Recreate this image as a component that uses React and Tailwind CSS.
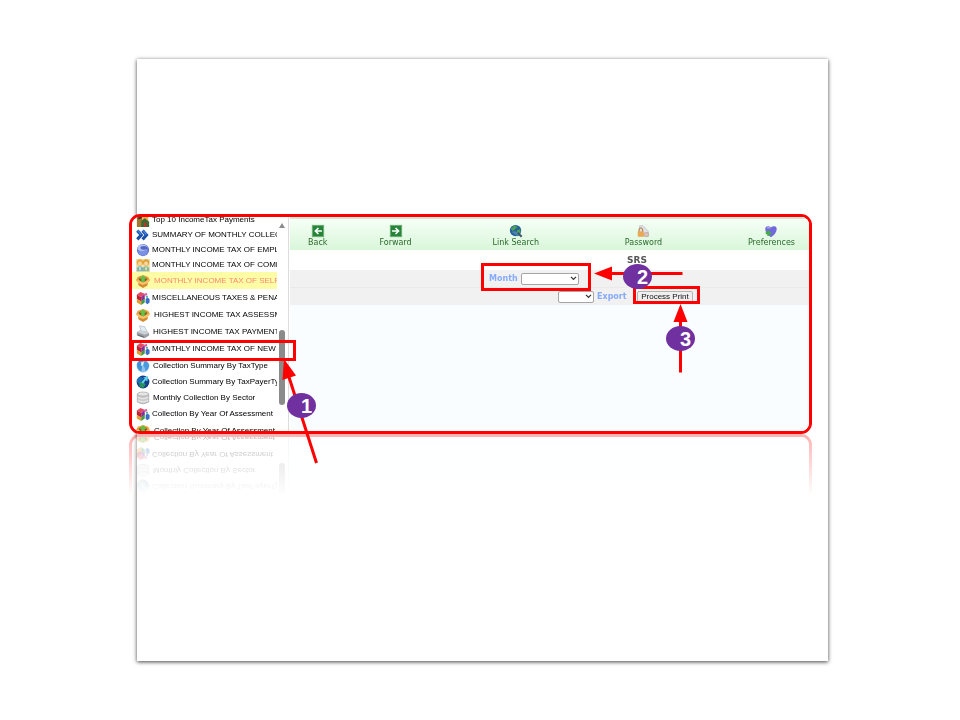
import React from "react";

function Icon({ children }) {
  return (
    <svg viewBox="0 0 16 16" className="h-[14px] w-[14px] shrink-0" aria-hidden="true">
      {children}
    </svg>
  );
}

const ICONS = {
  people: (
    <>
      <rect x="1" y="5" width="6" height="11" fill="#a07830" />
      <circle cx="4" cy="4" r="3" fill="#443322" />
      <rect x="7" y="3" width="7" height="7" fill="#e4b44b" />
      <path d="M6 16V9l4-3 5 4v6z" fill="#3c6b35" />
      <path d="M9 16v-5h3v5z" fill="#b53a2a" />
    </>
  ),
  chevrons: (
    <>
      <path d="M1.500 3l4.500 5-4.500 5" fill="none" stroke="#1c4fa8" strokeWidth="3.600" />
      <path d="M7.500 3l4.500 5-4.500 5" fill="none" stroke="#1c4fa8" strokeWidth="3.600" />
      <path d="M2 3l4 4.500M8 3l4 4.500" fill="none" stroke="#3f8be6" strokeWidth="1.500" />
    </>
  ),
  sphere: (
    <>
      <circle cx="8" cy="8" r="7" fill="#5a72cf" />
      <circle cx="8" cy="9" r="5.500" fill="#7d92e4" />
      <path d="M1.500 7q0-4 4-5.500 5-1 8 3-2 4-6 4.500-4 0-6-2z" fill="#b4c2f6" />
      <ellipse cx="9" cy="5.500" rx="4" ry="2.200" fill="#5468bd" />
    </>
  ),
  users: (
    <>
      <rect width="16" height="15" y="1" fill="#f0e2ae" />
      <circle cx="4.500" cy="5" r="3.600" fill="#e8a83a" />
      <circle cx="4.500" cy="6.200" r="2.200" fill="#f7d6a2" />
      <circle cx="11.500" cy="5" r="3.600" fill="#e0a03a" />
      <circle cx="11.500" cy="6.200" r="2.200" fill="#f7d6a2" />
      <path d="M1 15v-4q3.500-3.500 7 0v4z" fill="#79b5bd" />
      <path d="M8 15v-4q3.500-3.500 7 0v4z" fill="#8eb795" />
      <path d="M4.500 10v4M11.500 10v4" stroke="#e7edc9" strokeWidth="1.500" />
    </>
  ),
  box: (
    <>
      <path d="M2 8l1 5 5 3 5-3 1-5z" fill="#d68a30" />
      <path d="M2 3l6-2 6 2 2 4-3 3-5 2-5-2-3-3z" fill="#e7a544" />
      <path d="M3 5q5-4 10 0-1 4-5 4.500Q4 9 3 5z" fill="#8a5a1c" />
      <path d="M8 1.500l4.500 4H10V9H6V5.500H3.500z" fill="#66c046" />
      <path d="M0 7l3 0 5 3 5-3 3 0-3 3.500-5 2-5-2z" fill="#f5c46c" />
    </>
  ),
  cube: (
    <>
      <path d="M1 4l4-3 5 2-4 4z" fill="#e34a63" />
      <path d="M1 4l5 3v5l-5-3z" fill="#c2202c" />
      <path d="M6 7l4-4v6l-4 3z" fill="#8a2d9c" />
      <path d="M1 9l5 3v4l-5-3z" fill="#e99a2c" />
      <path d="M6 12l4-4v5l-4 3z" fill="#3d9a41" />
      <path d="M11 9l2-1.500 2.500 1.500v4L13 15l-2-1.500z" fill="#3b6dc9" />
      <path d="M10 3l2-1 1 2-2 2z" fill="#e6579a" />
      <path d="M11 6l2-1 1 2-2 1z" fill="#4fb0a0" />
    </>
  ),
  printer: (
    <>
      <path d="M4 1l6 1 3 6H6z" fill="#e3edf6" stroke="#a7b1bd" strokeWidth=".7" />
      <path d="M1 8l4-2 10 3v3l-5 3-9-3z" fill="#9da1a7" />
      <path d="M1 8l4-2 10 3-5 2z" fill="#cfd2d6" />
      <path d="M2 10.500l7 2.500v1.500l-7-2.500z" fill="#686d74" />
    </>
  ),
  globe: (
    <>
      <circle cx="8" cy="8" r="7.300" fill="#8cc4ee" />
      <path d="M1 6q1-4 5-5l2 2-2 3 1 3-1 5q-5-2-5-8z" fill="#3f8fd4" />
      <path d="M10 2q4 1 5 6-1 4-4 6l-1-4-2-3z" fill="#4a9add" />
      <path d="M6 3l3 1-1 3-2 1z" fill="#e1f2fc" />
    </>
  ),
  earth: (
    <>
      <circle cx="8" cy="8" r="7.300" fill="#12408f" />
      <path d="M1 6q1-3 4-4l4 2-3 3-1 4q-4-2-4-5z" fill="#1d6fb5" />
      <path d="M4 8l5 0 2 3-3 4-4-2z" fill="#27925f" />
      <path d="M8 3l6-2-1 6-2-1-3 4-2-2 4-4z" fill="#5fd0e6" />
    </>
  ),
  database: (
    <>
      <path d="M1.500 3.500v9q6.500 4 13 0v-9z" fill="#cbcbcb" stroke="#a3a3a3" strokeWidth=".8" />
      <ellipse cx="8" cy="3.500" rx="6.500" ry="2.300" fill="#e6e6e6" stroke="#a3a3a3" strokeWidth=".8" />
      <path d="M2 7.500q6 3 12 0M2 11q6 3 12 0" fill="none" stroke="#f1f1f1" />
    </>
  ),
  back: (
    <>
      <rect x="1.500" y="1.500" width="13" height="13" fill="#27853a" stroke="#6fae78" />
      <path d="M12.500 8H5M8.500 4.500L5 8l3.500 3.500" fill="none" stroke="#fff" strokeWidth="1.800" />
    </>
  ),
  forward: (
    <>
      <rect x="1.500" y="1.500" width="13" height="13" fill="#27853a" stroke="#6fae78" />
      <path d="M3.500 8H11M7.500 4.500L11 8l-3.500 3.500" fill="none" stroke="#fff" strokeWidth="1.800" />
    </>
  ),
  search: (
    <>
      <circle cx="7.500" cy="7.500" r="6.500" fill="#28609c" />
      <path d="M2 5l4-3 4 1-3 3-3 2zM9 7l4-1v4l-4 2z" fill="#4da354" />
      <path d="M3 9q4-2 7 1l3 3-3 1z" fill="#4c86ad" />
      <path d="M10 10l4.500 4.500" stroke="#3b5a6e" strokeWidth="2.400" />
    </>
  ),
  password: (
    <>
      <path d="M4 2h4l6 6v6H4z" fill="#dfe1e8" stroke="#b9bcc6" strokeWidth=".7" />
      <path d="M3.500 9V6q2-3 4 0v3" fill="none" stroke="#b98d55" strokeWidth="1.400" />
      <rect x="2" y="8.500" width="7" height="6" fill="#eaa852" />
      <path d="M10 10h4v4h-4z" stroke="#b59a90" strokeWidth=".8" fill="#e6cbc0" />
    </>
  ),
  preferences: (
    <>
      <path d="M8 15C0 10 0 2.500 4.500 2.500q2.500 0 3.500 1.500 1-1.500 3.500-1.500C16 2.500 16 10 8 15z" fill="#7169da" />
      <path d="M3.500 5q2-2 3.500 0" stroke="#aaa5f2" strokeWidth="1.500" fill="none" />
      <path d="M5 7.500v6M2 10.500h6" stroke="#43ad43" strokeWidth="2.600" />
    </>
  ),
};

const REPORTS = [
  { icon: "people", text: "Top 10 IncomeTax Payments", row: "h-[15px] gap-[2px]" },
  { icon: "chevrons", text: "SUMMARY OF MONTHLY COLLECTION", row: "h-[15px] gap-[2px]" },
  { icon: "sphere", text: "MONTHLY INCOME TAX OF EMPLOYEES", row: "h-[15px] gap-[2px]" },
  { icon: "users", text: "MONTHLY INCOME TAX OF COMPANIES", row: "h-[15px] gap-[2px]" },
  { icon: "box", text: "MONTHLY INCOME TAX OF SELF EMPLOYED", row: "h-[17px] gap-1 bg-[#fffca6] text-[#fb8a72]" },
  { icon: "cube", text: "MISCELLANEOUS TAXES & PENALTIES", row: "h-[17px] gap-[2px]" },
  { icon: "box", text: "HIGHEST INCOME TAX ASSESSMENT", row: "h-[17px] gap-1" },
  { icon: "printer", text: "HIGHEST INCOME TAX PAYMENT", row: "h-[17px] gap-[3px]" },
  { icon: "cube", text: "MONTHLY INCOME TAX OF NEW", row: "h-[17px] gap-[2px]" },
  { icon: "globe", text: "Collection Summary By TaxType", row: "h-[17px] gap-[3px]" },
  { icon: "earth", text: "Collection Summary By TaxPayerType", row: "h-4 gap-[2px]" },
  { icon: "database", text: "Monthly Collection By Sector", row: "h-4 gap-[3px]" },
  { icon: "cube", text: "Collection By Year Of Assessment", row: "h-4 gap-[2px]" },
  { icon: "box", text: "Collection By Year Of Assessment", row: "h-[17px] gap-1" },
];

function Sidebar() {
  return (
    <aside className="flex w-[157px] shrink-0 border-r border-[#dcdcdc] bg-white">
      <ul className="-mt-[5px] w-[145px] overflow-hidden font-['Liberation_Sans',Arial,sans-serif] text-[8px] leading-none text-black">
        {REPORTS.map((r, i) => (
          <li key={i}>
            <a href="#report" className={"flex items-center overflow-hidden pl-1 whitespace-nowrap " + r.row}>
              <Icon>{ICONS[r.icon]}</Icon>
              <span>{r.text}</span>
            </a>
          </li>
        ))}
      </ul>
      <div className="ml-[2px] flex w-[6px] flex-col items-center">
        <svg viewBox="0 0 6 5" className="mt-[6px] h-[5px] w-[6px]" aria-hidden="true">
          <path d="M3 0l3 5H0z" fill="#8b8b8b" />
        </svg>
        <div className="mt-[102px] h-[75px] w-[6px] shrink-0 rounded-full bg-[#8b8b8b]" />
      </div>
    </aside>
  );
}

function Tool({ icon, children }) {
  return (
    <button type="button" className="flex flex-col items-center text-[8px] leading-[9px] whitespace-nowrap text-[#2b6b2b]">
      <Icon>{ICONS[icon]}</Icon>
      {children}
    </button>
  );
}

function Select({ id, size }) {
  return (
    <span className={"relative flex h-3 items-center " + size}>
      <select
        id={id}
        className="h-3 w-full appearance-none rounded-[2px] border border-[#a5a5a5] bg-white text-[8px] leading-none"
      />
      <svg viewBox="0 0 8 6" className="pointer-events-none absolute right-[2px] h-[5px] w-[7px]" aria-hidden="true">
        <path d="M1 1l3 3 3-3" fill="none" stroke="#333" strokeWidth="1.500" />
      </svg>
    </span>
  );
}

function Workspace() {
  return (
    <section className="ml-px flex min-w-0 flex-1 flex-col bg-[#f9fdff] font-['DejaVu_Sans',Verdana,sans-serif]">
      <nav className="flex h-[33px] shrink-0 items-end border-t-2 border-[#d3e8d3] bg-linear-to-b from-[#f6fff6] to-[#d9f6da] pr-[14px] pb-[3px] pl-[18px]">
        <div className="flex gap-[52px]">
          <Tool icon="back">Back</Tool>
          <Tool icon="forward">Forward</Tool>
        </div>
        <div className="ml-[81px] flex flex-1 justify-between">
          <Tool icon="search">Link Search</Tool>
          <Tool icon="password">Password</Tool>
          <Tool icon="preferences">Preferences</Tool>
        </div>
      </nav>
      <h1 className="h-5 shrink-0 bg-white pl-[337px] text-[9px] leading-5 font-bold text-[#555]">SRS</h1>
      <form className="bg-[#f1f1f1] text-[8px] leading-none font-bold text-[#86abfb]">
        <div className="flex h-[18px] items-center border-b border-[#eaeaea] pl-[199px]">
          <label htmlFor="month" className="w-8">Month</label>
          <Select id="month" size="w-[58px]" />
        </div>
        <div className="flex h-[17px] items-center pl-[268px]">
          <Select id="export" size="w-9" />
          <label htmlFor="export" className="ml-[3px] w-10">Export</label>
          <button
            type="button"
            className="h-3 w-[56px] rounded-[2px] border border-[#b5b5b5] bg-[#efefef] font-['Liberation_Sans',Arial,sans-serif] text-[8px] leading-none font-normal whitespace-nowrap text-[#111]"
          >
            Process Print
          </button>
        </div>
      </form>
    </section>
  );
}

function Badge({ place, children }) {
  return (
    <span
      className={
        "absolute flex h-[25px] w-[29px] items-center justify-center rounded-[50%] bg-[#7030a0] pl-[10px] font-['Liberation_Sans',Arial,sans-serif] text-[20px] leading-none font-bold text-white " +
        place
      }
    >
      {children}
    </span>
  );
}

function Annotations() {
  return (
    <div className="pointer-events-none absolute inset-0">
      <div className="absolute top-[126px] left-[2px] h-[21px] w-[165px] border-3 border-[#ff0000]" />
      <div className="absolute top-[49px] left-[352px] h-7 w-[110px] border-3 border-[#ff0000]" />
      <div className="absolute top-[72px] left-[504px] h-[18px] w-[67px] border-3 border-[#ff0000]" />
      <svg width="683" height="260" viewBox="0 0 683 260" className="absolute top-0 left-0 overflow-visible" aria-hidden="true">
        <g stroke="#ff0000" strokeWidth="3" fill="none">
          <path d="M187.500 249L159 160" />
          <path d="M553.500 59.500H480" />
          <path d="M551.500 158.500V105" />
        </g>
        <g fill="#ff0000">
          <path d="M155 145L153.500 166L167 161.500z" />
          <path d="M465 59.500L483 52.500V66.500z" />
          <path d="M551.500 90L544.500 108H558.500z" />
        </g>
      </svg>
      <Badge place="top-[179px] left-[158px]">1</Badge>
      <Badge place="top-[50px] left-[494px]">2</Badge>
      <Badge place="top-[112px] left-[537px]">3</Badge>
    </div>
  );
}

export default function App() {
  return (
    <main className="min-h-screen bg-white pt-[59px] pr-[132px] pb-[59px] pl-[137px]">
      <article className="min-h-[602px] bg-white pt-[155px] shadow-[0_1px_4px_rgba(0,0,0,0.75)]">
        <div className="relative mr-4 -ml-2">
          <div className="flex h-[220px] overflow-hidden rounded-[11px] border-3 border-[#ff0000] bg-white [-webkit-box-reflect:below_0px_linear-gradient(transparent_72%,rgba(0,0,0,0.3))]">
            <Sidebar />
            <Workspace />
          </div>
          <Annotations />
        </div>
      </article>
    </main>
  );
}
